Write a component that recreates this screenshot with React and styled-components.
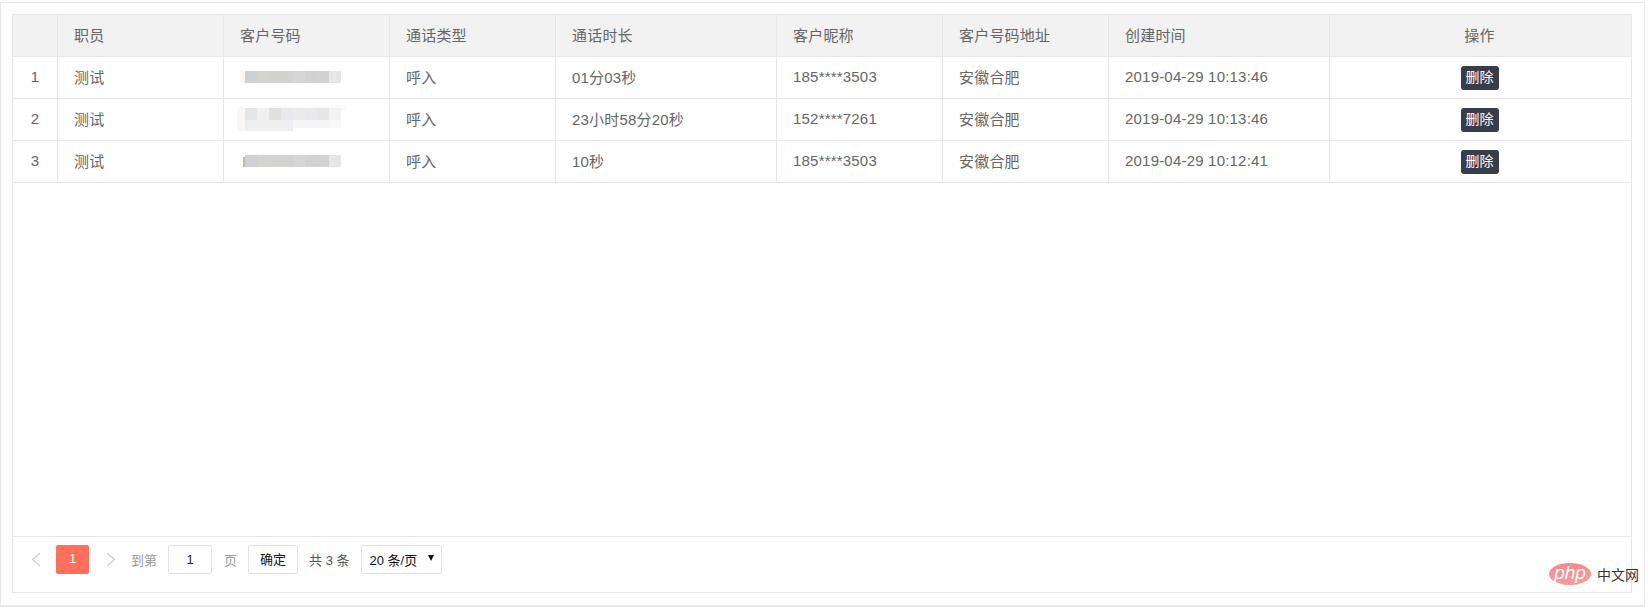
import React from 'react'
import styled, { createGlobalStyle } from 'styled-components'

const GlobalStyle = createGlobalStyle`
  html, body {
    margin: 0;
    padding: 0;
    background: #fff;
  }
  body {
    font-family: "Liberation Sans", "Noto Sans CJK SC", sans-serif;
    font-size: 15px;
    letter-spacing: 0.2px;
    color: #666;
  }
`

const Panel = styled.section`
  position: relative;
  box-sizing: border-box;
  width: 1645px;
  height: 605px;
  margin-top: 2px;
  padding: 11px 12px 12px 11px;
  border: 1px solid #e9e9e9;
  border-width: 1px 1px 2px 1px;
`

const Frame = styled.div`
  box-sizing: border-box;
  display: flex;
  flex-direction: column;
  width: 1620px;
  height: 579px;
  border: 1px solid #e6e6e6;
`

const Table = styled.table`
  table-layout: fixed;
  width: 1618px;
  border-collapse: separate;
  border-spacing: 0;
`

const Th = styled.th`
  box-sizing: border-box;
  width: ${p => p.$w}px;
  height: 42px;
  padding: 0 ${p => (p.$last ? 18 : 16)}px 3px 16px;
  font-weight: 400;
  text-align: ${p => p.$align || 'left'};
  background: #f2f2f2;
  border-right: ${p => (p.$last ? 'none' : '1px solid #e6e6e6')};
  border-bottom: 1px solid #e6e6e6;
`

const Td = styled.td`
  box-sizing: border-box;
  height: 42px;
  padding: 0 ${p => (p.$last ? 18 : 16)}px 3px 16px;
  text-align: ${p => p.$align || 'left'};
  border-right: ${p => (p.$last ? 'none' : '1px solid #e6e6e6')};
  border-bottom: 1px solid #e6e6e6;
`

const SmudgeCell = styled(Td)`
  padding-bottom: 0;
`

const DeleteButton = styled.span`
  display: inline-block;
  width: 38px;
  height: 24px;
  line-height: 23px;
  margin-top: 4px;
  vertical-align: middle;
  text-align: center;
  font-size: 14px;
  letter-spacing: 0;
  color: #fff;
  background: #393d49;
  border-radius: 3px;
`

const SmudgeSvg = styled.svg`
  display: block;
  margin-left: -4px;
`

const Spacer = styled.div`
  flex: 1;
`

const Pager = styled.div`
  display: flex;
  align-items: center;
  box-sizing: border-box;
  height: 56px;
  padding: 0 0 10px 9px;
  border-top: 1px solid #e6e6e6;
  font-size: 13px;
  letter-spacing: 0;
`

const Arrow = styled.span`
  display: flex;
  justify-content: center;
  width: 27px;
  margin-left: ${p => p.$ml || 0}px;
  margin-right: ${p => p.$mr || 0}px;
`

const PageCurrent = styled.span`
  box-sizing: border-box;
  width: 33px;
  height: 29px;
  line-height: 28px;
  text-align: center;
  color: #fff;
  background: #ff6f59;
  border-radius: 2px;
`

const PagerText = styled.span`
  margin-left: ${p => p.$ml}px;
  color: ${p => p.$color || '#999'};
  white-space: nowrap;
`

const JumpBox = styled.span`
  box-sizing: border-box;
  width: 44px;
  height: 29px;
  margin-left: 11px;
  line-height: 27px;
  text-align: center;
  color: #222;
  border: 1px solid #e2e2e2;
  border-radius: 2px;
`

const ConfirmButton = styled.span`
  box-sizing: border-box;
  width: 50px;
  height: 29px;
  margin-left: 11px;
  line-height: 27px;
  text-align: center;
  color: #111;
  border: 1px solid #e2e2e2;
  border-radius: 2px;
`

const SizeSelect = styled.span`
  box-sizing: border-box;
  display: flex;
  align-items: center;
  width: 81px;
  height: 29px;
  margin-left: 11px;
  padding-left: 8px;
  color: #111;
  border: 1px solid #e2e2e2;
  border-radius: 2px;
  white-space: nowrap;
`

const Caret = styled.span`
  width: 0;
  height: 0;
  margin-left: 11px;
  margin-bottom: 3px;
  border-style: solid;
  border-width: 6px 3.5px 0 3.5px;
  border-color: #111 transparent transparent transparent;
`

const Watermark = styled.div`
  position: absolute;
  left: 1548px;
  top: 560px;
  display: flex;
  align-items: center;
  letter-spacing: 0;
`

const PhpBadge = styled.span`
  width: 42px;
  height: 22px;
  line-height: 20px;
  text-align: center;
  font-size: 19px;
  font-style: italic;
  color: #fff;
  background: linear-gradient(#f48a8a, #fb9c9c);
  border-radius: 50%;
`

const PhpName = styled.span`
  margin-left: 6px;
  font-size: 14px;
  color: #333;
`

const columns = [
  { title: '', w: 45 },
  { title: '职员', w: 166 },
  { title: '客户号码', w: 166 },
  { title: '通话类型', w: 166 },
  { title: '通话时长', w: 221 },
  { title: '客户昵称', w: 166 },
  { title: '客户号码地址', w: 166 },
  { title: '创建时间', w: 221 },
  { title: '操作', w: 301, align: 'center', last: true },
]

const dark = ['#cdd0d4', '#d4d3d0', '#d3d2cf', '#d2d2d0', '#d5d7d6', '#cfd1d3', '#d2d2ce', '#e5e6e8']
const paleTop = ['#e5e6e8', '#f0f0f0', '#e0e0dc', '#e8e9ec', '#ecebeb', '#e8e9ec', '#e6e6e4', '#f2f2f2']
const paleBottom = ['#eeeeef', '#efefef', '#f0efee', '#eeeef0', '#f5f5f5', '#f5f5f5', '#f5f5f5', '#f8f8f8']

// the phone numbers are pixelated in the picture
const Smudge = ({ row }) => (
  <SmudgeSvg width="112" height="41" viewBox="0 0 112 41">
    {row === 2 ? (
      <>
        <rect x="1" y="8" width="10" height="24" rx="5" fill="#f9f8f5" />
        <rect x="30" y="6" width="80" height="6" rx="3" fill="#fbfbfb" />
        {paleTop.map((c, i) => (
          <rect key={i} x={9 + i * 12} y="9" width="12" height="12" fill={c} />
        ))}
        {paleBottom.map((c, i) => (
          <rect key={i} x={9 + i * 12} y="21" width="12" height={i < 4 ? 11 : 8} fill={c} />
        ))}
      </>
    ) : (
      <>
        {row === 1 ? (
          <rect x="4" y="14" width="7" height="12" rx="3" fill="#faf7f0" />
        ) : (
          <rect x="7" y="16" width="2" height="10" fill="#c8b8a8" />
        )}
        {dark.map((c, i) => (
          <rect key={i} x={9 + i * 12} y="14" width="12" height="12" fill={c} />
        ))}
      </>
    )}
  </SmudgeSvg>
)

const rows = [
  { id: 1, row: 1, type: '呼入', time: '01分03秒', nick: '185****3503', addr: '安徽合肥', date: '2019-04-29 10:13:46' },
  { id: 2, row: 2, type: '呼入', time: '23小时58分20秒', nick: '152****7261', addr: '安徽合肥', date: '2019-04-29 10:13:46' },
  { id: 3, row: 3, type: '呼入', time: '10秒', nick: '185****3503', addr: '安徽合肥', date: '2019-04-29 10:12:41' },
]

const Chevron = ({ flip }) => (
  <svg width="10" height="15" viewBox="0 0 10 15" fill="none">
    <path
      d={flip ? 'M1 1l7.5 6.5L1 14' : 'M9 1L1.5 7.5 9 14'}
      stroke="#d2d2d2"
      strokeWidth="1.4"
    />
  </svg>
)

const App = () => (
  <Panel>
    <GlobalStyle />
    <Frame>
      <Table>
        <thead>
          <tr>
            {columns.map((c, i) => (
              <Th key={i} $w={c.w} $align={c.align} $last={c.last}>{c.title}</Th>
            ))}
          </tr>
        </thead>
        <tbody>
          {rows.map(r => (
            <tr key={r.id}>
              <Td $align="center">{r.id}</Td>
              <Td>测试</Td>
              <SmudgeCell><Smudge row={r.row} /></SmudgeCell>
              <Td>{r.type}</Td>
              <Td>{r.time}</Td>
              <Td>{r.nick}</Td>
              <Td>{r.addr}</Td>
              <Td>{r.date}</Td>
              <Td $align="center" $last><DeleteButton>删除</DeleteButton></Td>
            </tr>
          ))}
        </tbody>
      </Table>
      <Spacer />
      <Pager>
        <Arrow $mr={7}><Chevron /></Arrow>
        <PageCurrent>1</PageCurrent>
        <Arrow $ml={8}><Chevron flip /></Arrow>
        <PagerText $ml={7}>到第</PagerText>
        <JumpBox>1</JumpBox>
        <PagerText $ml={12}>页</PagerText>
        <ConfirmButton>确定</ConfirmButton>
        <PagerText $ml={11} $color="#555">共 3 条</PagerText>
        <SizeSelect>20 条/页<Caret /></SizeSelect>
      </Pager>
    </Frame>
    <Watermark>
      <PhpBadge>php</PhpBadge>
      <PhpName>中文网</PhpName>
    </Watermark>
  </Panel>
)

export default App
